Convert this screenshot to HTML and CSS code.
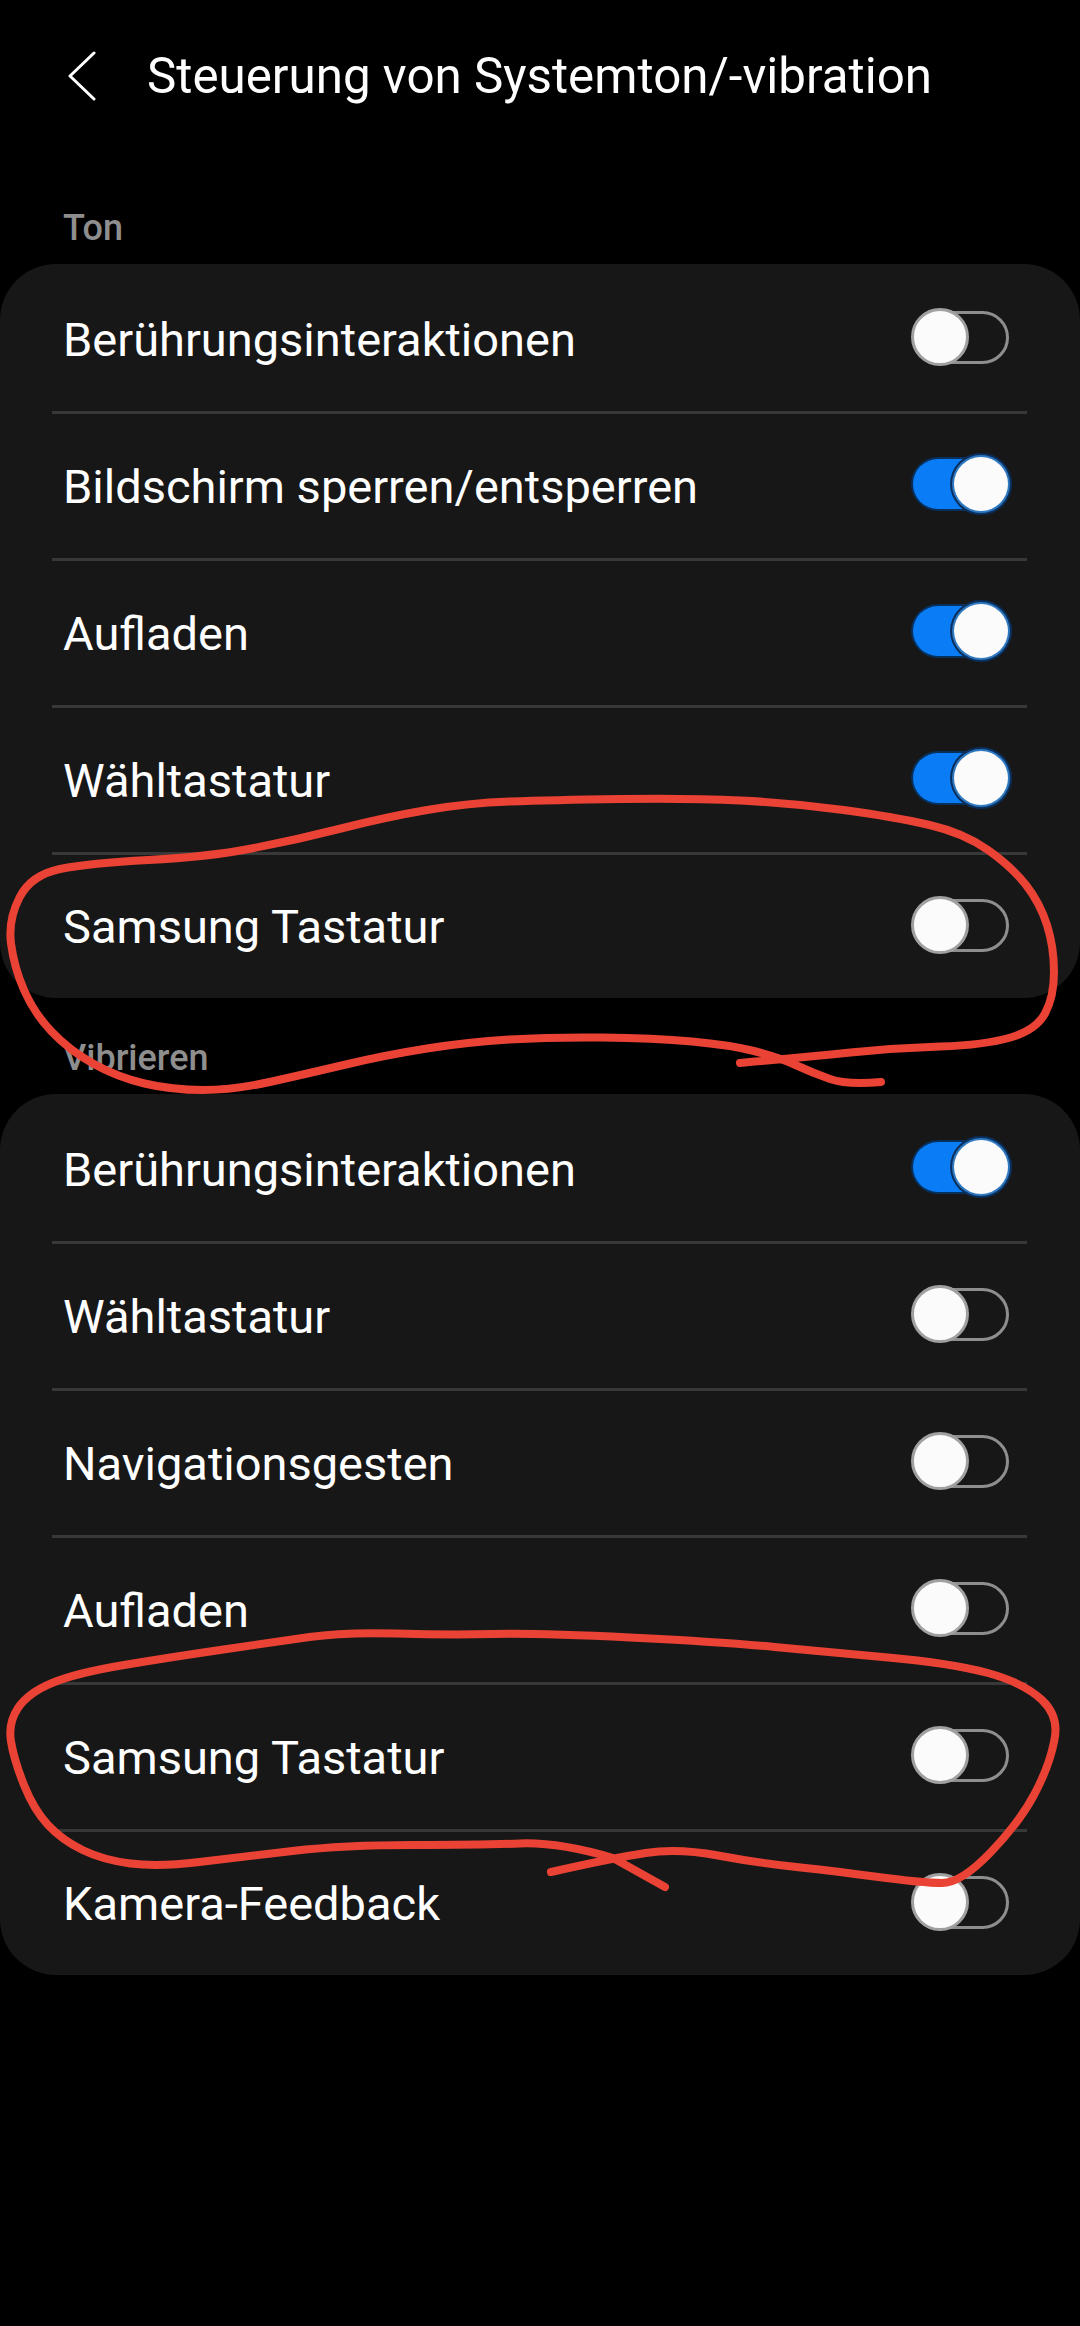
FILE: index.html
```html
<!DOCTYPE html>
<html lang="de">
<head>
    <meta charset="UTF-8">
    <meta name="viewport" content="width=device-width, initial-scale=1.0">
    <title>Steuerung von Systemton/-vibration</title>
    <link rel="stylesheet" href="styles.css">
</head>
<body>
    <header class="topbar">
        <svg class="back" viewBox="0 0 32 50" width="32" height="50">
            <path d="M28 2 L4 25 L28 48" fill="none" stroke="#fff" stroke-width="3" stroke-linecap="round" stroke-linejoin="round"/>
        </svg>
        <h1>Steuerung von Systemton/-vibration</h1>
    </header>

    <h2 class="section-label">Ton</h2>
    <section class="card">
        <div class="row"><span>Berührungsinteraktionen</span><div class="toggle"><i></i></div></div>
        <div class="row"><span>Bildschirm sperren/entsperren</span><div class="toggle on"><i></i></div></div>
        <div class="row"><span>Aufladen</span><div class="toggle on"><i></i></div></div>
        <div class="row"><span>Wähltastatur</span><div class="toggle on"><i></i></div></div>
        <div class="row"><span>Samsung Tastatur</span><div class="toggle"><i></i></div></div>
    </section>

    <h2 class="section-label">Vibrieren</h2>
    <section class="card">
        <div class="row"><span>Berührungsinteraktionen</span><div class="toggle on"><i></i></div></div>
        <div class="row"><span>Wähltastatur</span><div class="toggle"><i></i></div></div>
        <div class="row"><span>Navigationsgesten</span><div class="toggle"><i></i></div></div>
        <div class="row"><span>Aufladen</span><div class="toggle"><i></i></div></div>
        <div class="row"><span>Samsung Tastatur</span><div class="toggle"><i></i></div></div>
        <div class="row"><span>Kamera-Feedback</span><div class="toggle"><i></i></div></div>
    </section>

    <!-- hand drawn red circles on top of the screenshot -->
    <svg class="scribble" viewBox="0 0 1080 2326" width="1080" height="2326">
        <path d="M881 1082 Q847 1085 830 1079 Q813 1073 795.5 1065 Q778 1057 754 1051 Q730 1045 692 1041.5 Q654 1038 602 1037.5 Q551 1037 509 1039.5 Q468 1042 427 1048.5 Q386 1055 348 1064 Q310 1073 272 1081.5 Q234 1090 203 1090 Q172 1090 144.5 1083.5 Q117 1077 93 1063.5 Q69 1050 51.5 1031.5 Q34 1013 24 990 Q14 967 11 943.5 Q8 920 19.5 897.5 Q31 875 60 869 Q90 863 148.5 860 Q207 857 251.5 848.5 Q296 840 341 828.5 Q386 817 427 810 Q468 803 509.5 801.5 Q551 800 620 799 Q689 798 740.5 800.5 Q792 803 843.5 810 Q895 817 929.5 825 Q964 833 988 850 Q1012 867 1026 885 Q1040 903 1047 925 Q1054 947 1054 972 Q1054 997 1045 1013.5 Q1036 1030 1010.5 1037.5 Q985 1045 940 1046.5 Q895 1048 850.5 1052.5 Q806 1057 740 1063"/>
        <path d="M665 1887 L613 1858 Q558 1842 520 1843.5 Q482 1845 413 1845 Q344 1845 292.5 1851 Q241 1857 199.5 1862 Q158 1867 130.5 1863.5 Q103 1860 82.5 1850 Q62 1840 48 1825 Q34 1810 24 1785 Q14 1760 11 1741.5 Q8 1723 18 1708 Q28 1693 52 1683 Q76 1673 124 1665 Q172 1657 223.5 1649.5 Q275 1642 309.5 1637 Q344 1632 396 1633.5 Q448 1635 492.5 1634 Q537 1633 630 1637.5 Q723 1642 774.5 1647 Q826 1652 888 1657.5 Q950 1663 988 1673 Q1024 1683 1042 1700 Q1060 1717 1054 1742 Q1049 1767 1034 1795 Q1019 1823 990 1853 Q961 1883 942 1883 Q923 1883 874.5 1876.5 Q826 1870 792 1866.5 Q758 1863 718 1855.5 Q678 1848 645.5 1853 Q613 1858 551 1872"/>
    </svg>
</body>
</html>
```

FILE: styles.css
```css
body {
    margin: 0;
    height: 2326px;
    background-color: #000;
    color: #fff;
    font-family: Roboto, "Liberation Sans", sans-serif;
    overflow: hidden;
}
.topbar {
    display: flex;
    align-items: center;
    gap: 49px;
    height: 152px;
    padding-left: 66px;
    box-sizing: border-box;
}
.back {
    flex: none;
}
.topbar h1 {
    margin: 0;
    font-size: 49.3px;
    font-weight: 400;
}
.section-label {
    display: flex;
    align-items: flex-end;
    height: 96px;
    margin: 0;
    padding: 0 0 16px 63px;
    box-sizing: border-box;
    font-size: 36px;
    font-weight: 500;
    line-height: 40px;
    color: #8e8e8e;
}
.section-label:first-of-type {
    height: 112px;
}
.card {
    background-color: #171717;
    border-radius: 56px;
}
.row {
    display: flex;
    align-items: center;
    justify-content: space-between;
    height: 147px;
    margin: 0 53px 0 52px;
    padding: 0 17px 0 11px;
    box-sizing: border-box;
    font-size: 47px;
}
.row:last-child {
    height: 146px;
}
.row + .row {
    padding-bottom: 3px;
    border-top: 3px solid #383838;
}
.row span {
    margin-top: 3px;
}
.toggle {
    position: relative;
    width: 94px;
    height: 53px;
    margin-right: 1px;
    box-sizing: border-box;
    border: 3px solid #8e8e8e;
    border-radius: 27px;
}
.toggle i {
    position: absolute;
    left: -7px;
    top: -6px;
    width: 58px;
    height: 58px;
    box-sizing: border-box;
    border: 3px solid #a0a0a0;
    border-radius: 50%;
    background-color: #fbfbfb;
}
.toggle.on {
    width: 97px;
    height: 50px;
    margin-top: -2px;
    margin-right: 0;
    border: none;
    border-radius: 25px;
    background-color: #0a7cf5;
    box-shadow: 0 0 0 2px #07305c;
}
.toggle.on i {
    left: auto;
    right: 2px;
    top: -2px;
    width: 54px;
    height: 54px;
    border: none;
    box-shadow: 0 0 0 2px #2f79c0, 0 0 0 4px #0a2f5c;
}
.scribble {
    position: absolute;
    left: 0;
    top: 0;
    pointer-events: none;
}
.scribble path {
    fill: none;
    stroke: #ea4335;
    stroke-width: 8;
    stroke-linecap: round;
    stroke-linejoin: round;
}
```
